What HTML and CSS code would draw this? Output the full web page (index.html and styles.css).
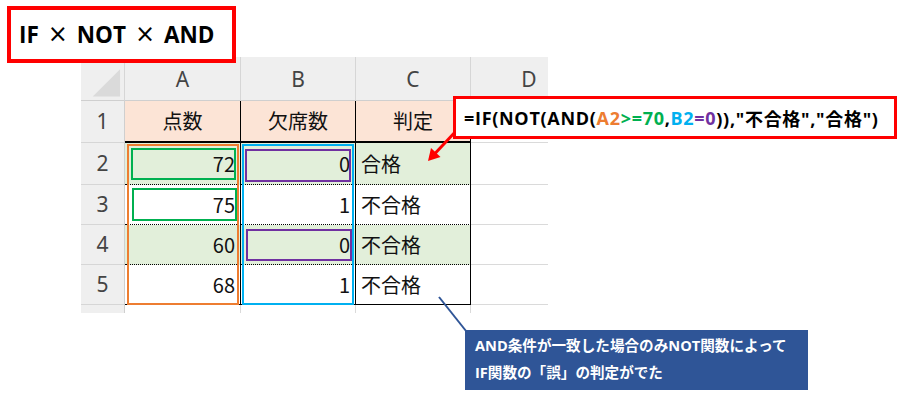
FILE: index.html
```html
<!DOCTYPE html>
<html lang="ja">
<head>
<meta charset="utf-8">
<title>IF × NOT × AND</title>
<link rel="stylesheet" href="styles.css">
</head>
<body>
<div class="page">
  <div class="title">IF<span class="times">×</span>NOT<span class="times">×</span>AND</div>

  <div class="sheet">
    <div class="col col-rh">
      <div class="cell hd corner">
        <svg width="44" height="44" viewBox="0 0 44 44"><polygon points="12,40 40,12 40,40" fill="#dadada"/></svg>
      </div>
      <div class="cell rh r1">1</div>
      <div class="cell rh r2">2</div>
      <div class="cell rh r3">3</div>
      <div class="cell rh r3">4</div>
      <div class="cell rh r3">5</div>
      <div class="cell rh r3"></div>
    </div>

    <div class="col col-a">
      <div class="cell hd">A</div>
      <div class="cell t1 ctr">点数</div>
      <div class="grp grp-orange">
        <div class="cell r2 green dot num box-green box-a2">72</div>
        <div class="cell r3 dot num box-green box-a3">75</div>
        <div class="cell r3 green dot num">60</div>
        <div class="cell r3 last num">68</div>
      </div>
      <div class="cell r3 grid"></div>
    </div>

    <div class="col col-b">
      <div class="cell hd">B</div>
      <div class="cell t1 ctr">欠席数</div>
      <div class="grp grp-blue">
        <div class="cell r2 green dot num box-purple box-b2">0</div>
        <div class="cell r3 dot num">1</div>
        <div class="cell r3 green dot num box-purple box-b4">0</div>
        <div class="cell r3 last num">1</div>
      </div>
      <div class="cell r3 grid"></div>
    </div>

    <div class="col col-c">
      <div class="cell hd">C</div>
      <div class="cell t1 ctr">判定</div>
      <div class="cell r2 green dot txt">合格</div>
      <div class="cell r3 dot txt">不合格</div>
      <div class="cell r3 green dot txt">不合格</div>
      <div class="cell r3 last txt">不合格</div>
      <div class="cell r3 grid"></div>
    </div>

    <div class="col col-d">
      <div class="cell hd">D</div>
      <div class="cell r1 grid"></div>
      <div class="cell r2 grid"></div>
      <div class="cell r3 grid"></div>
      <div class="cell r3 grid"></div>
      <div class="cell r3 grid"></div>
      <div class="cell r3 grid"></div>
    </div>
  </div>

  <svg class="marks" width="908" height="398" viewBox="0 0 908 398">
    <line x1="439" y1="297" x2="470" y2="336" stroke="#2f5597" stroke-width="2"/>
    <line x1="458" y1="129" x2="435" y2="153.5" stroke="#ff0000" stroke-width="3"/>
    <polygon points="428,161 440.5,157 431,148" fill="#ff0000"/>
  </svg>

  <div class="formula">=IF(NOT(AND(<span class="c-or">A2</span><span class="c-gr">&gt;=70</span>,<span class="c-bl">B2</span><span class="c-pu">=0</span>)),"不合格","合格")</div>

  <div class="note">AND条件が一致した場合のみNOT関数によって<br>IF関数の「誤」の判定がでた</div>
</div>
</body>
</html>
```

FILE: styles.css
```css
* { box-sizing: border-box; }

html, body {
  margin: 0;
  padding: 0;
  background: #ffffff;
}

.page {
  position: relative;
  width: 908px;
  height: 398px;
  overflow: hidden;
  font-family: "Noto Sans CJK JP", sans-serif;
}

.title {
  position: relative;
  z-index: 2;
  width: 229px;
  height: 57px;
  margin: 6px 0 0 7px;
  padding-left: 8px;
  border: 4px solid #ff0000;
  background: #ffffff;
  display: flex;
  align-items: center;
  font-family: "Open Sans", "Noto Sans CJK JP", sans-serif;
  font-weight: 700;
  font-size: 22.5px;
  color: #000;
}

.times {
  display: inline-block;
  width: 38px;
  text-align: center;
  font-family: "DejaVu Sans", sans-serif;
  font-weight: 400;
  font-size: 24px;
  position: relative;
  top: -1px;
}

/* sheet */
.sheet {
  position: relative;
  z-index: 1;
  display: flex;
  width: 467px;
  height: 256px;
  margin: -6px 0 0 81px;
  overflow: hidden;
  background: #ffffff;
}

.col {
  display: flex;
  flex-direction: column;
  flex: none;
}

.col-rh { width: 44px; }
.col-a { width: 116px; }
.col-b { width: 115px; }
.col-c { width: 115px; }
.col-d { width: 116px; }

.cell {
  flex: none;
  display: flex;
  align-items: center;
  font-size: 20px;
  color: #111;
  line-height: 1;
}

.hd {
  height: 44px;
  background: #efefef;
  border-right: 1px solid #d6d6d6;
  border-bottom: 1px solid #cfcfcf;
  justify-content: center;
  color: #444;
  font-family: "Noto Sans", sans-serif;
  font-size: 21px;
  padding-top: 2px;
}

.col-d .hd { border-right: none; }

.corner { padding: 0; }

.rh {
  background: #efefef;
  border-right: 1px solid #cfcfcf;
  border-bottom: 1px solid #d6d6d6;
  justify-content: center;
  color: #444;
  font-family: "Noto Sans", sans-serif;
  font-size: 21px;
}

.r1 { height: 42px; }
.r2 { height: 42px; }
.r3 { height: 40px; }

.t1 {
  height: 42px;
  background: #fce4d6;
  border-right: 1px solid #000;
  border-bottom: 2px solid #000;
}

.ctr { justify-content: center; }

.green { background: #e2efda; }

.dot {
  border-right: 1px solid #000;
  border-bottom: 1px dotted #000;
}

.last {
  border-right: 1px solid #000;
  border-bottom: 1px solid #000;
}

.grid {
  border-right: 1px solid #dadada;
  border-bottom: 1px solid #dadada;
}

.col-d .grid { border-right: none; }

.num {
  justify-content: flex-end;
  padding-right: 5px;
}

.txt {
  padding-left: 5px;
}

/* coloured range boxes */
.grp {
  position: relative;
  display: flex;
  flex-direction: column;
}

.grp::after {
  content: "";
  position: absolute;
  top: 1px;
  left: 2px;
  right: 2px;
  bottom: 0;
  border: 2px solid;
  pointer-events: none;
}

.grp-orange::after { border-color: #ed7d31; }
.grp-blue::after { border-color: #00b0f0; left: 1px; right: 2px; }

.box-green, .box-purple { position: relative; }

.box-green::before, .box-purple::before {
  content: "";
  position: absolute;
  border: 2px solid;
  pointer-events: none;
}

.box-green::before { border-color: #00b050; }
.box-purple::before { border-color: #7030a0; }

.box-a2::before { top: 5px; left: 6px; right: 4px; bottom: 4px; }
.box-a3::before { top: 3px; left: 7px; right: 3px; bottom: 3px; }
.box-b2::before { top: 6px; left: 4px; right: 4px; bottom: 2px; }
.box-b4::before { top: 4px; left: 5px; right: 3px; bottom: 3px; }

/* annotations */
.marks {
  position: absolute;
  left: 0;
  top: 0;
  z-index: 3;
  pointer-events: none;
}

.formula {
  position: absolute;
  z-index: 4;
  left: 453px;
  top: 96px;
  width: 444px;
  height: 43px;
  border: 3px solid #ff0000;
  background: #ffffff;
  padding-left: 8px;
  display: flex;
  align-items: center;
  font-family: "Open Sans", "Noto Sans CJK JP", sans-serif;
  font-weight: 700;
  font-size: 18px;
  letter-spacing: 0.7px;
  color: #000;
  white-space: nowrap;
}

.c-or { color: #ed7d31; }
.c-gr { color: #00b050; }
.c-bl { color: #00b0f0; }
.c-pu { color: #7030a0; }

.note {
  position: absolute;
  z-index: 4;
  left: 465px;
  top: 330px;
  width: 343px;
  height: 60px;
  background: #2f5597;
  color: #ffffff;
  padding: 2px 0 0 10px;
  font-family: "Open Sans", "Noto Sans CJK JP", sans-serif;
  font-weight: 700;
  font-size: 14.6px;
  line-height: 27px;
  white-space: nowrap;
}
```
